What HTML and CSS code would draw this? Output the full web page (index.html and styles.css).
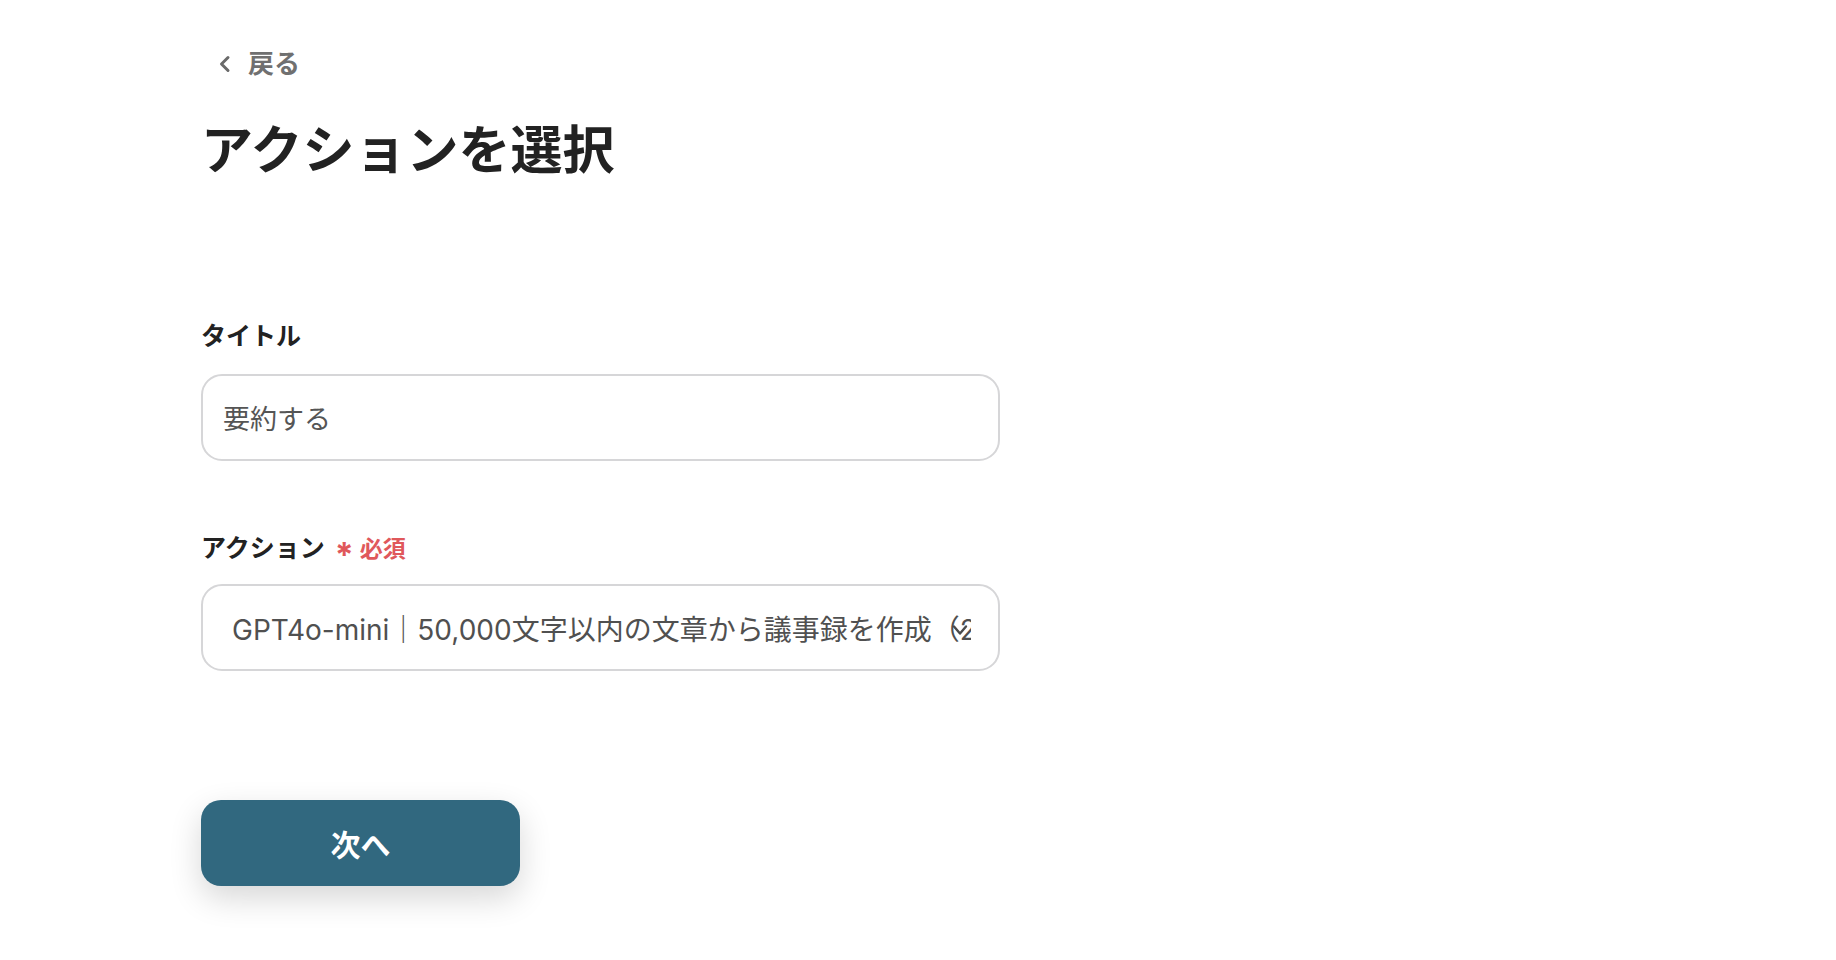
FILE: index.html
```html
<!DOCTYPE html>
<html lang="ja">
  <head>
    <meta charset="utf-8">
    <title>アクションを選択</title>
    <link rel="stylesheet" href="styles.css">
  </head>
  <body>
    <div class="page">
      <a class="back" href="#">
        <svg class="back-icon" width="16" height="18" viewBox="0 0 16 18">
          <path d="M11 2.5 L4.5 9 L11 15.5" fill="none" stroke="#6a6a6a" stroke-width="3" stroke-linecap="round" stroke-linejoin="round"/>
        </svg>
        <span>戻る</span>
      </a>
      <h1 class="title">アクションを選択</h1>

      <div class="field field-first">
        <div class="label">タイトル</div>
        <div class="box">
          <span class="box-text">要約する</span>
        </div>
      </div>

      <div class="field">
        <div class="label">アクション <span class="required"><span class="star">*</span>必須</span></div>
        <div class="box select">
          <span class="select-text">GPT4o-mini｜50,000文字以内の文章から議事録を作成（2</span>
          <svg class="chevron" width="16" height="14" viewBox="0 0 16 14">
            <path d="M2 3.5 L8 10.5 L14 3.5" fill="none" stroke="#4a4a4a" stroke-width="2.4" stroke-linecap="round" stroke-linejoin="round"/>
          </svg>
        </div>
      </div>

      <button class="next">次へ</button>
    </div>
  </body>
</html>
```

FILE: styles.css
```css
* {
  box-sizing: border-box;
}

body {
  margin: 0;
  background: #ffffff;
  font-family: Inter, "Noto Sans CJK JP", sans-serif;
  color: #222222;
}

.page {
  display: flex;
  flex-direction: column;
  align-items: flex-start;
  padding: 51px 0 80px 201px;
}

.back {
  display: flex;
  align-items: center;
  gap: 15px;
  margin-left: 16px;
  height: 26px;
  color: #707070;
  font-size: 26px;
  line-height: 26px;
  font-weight: 700;
  text-decoration: none;
}

.title {
  margin: 44px 0 0 0;
  font-size: 52px;
  line-height: 60px;
  font-weight: 700;
  color: #222222;
}

.field {
  display: flex;
  flex-direction: column;
  margin-top: 71px;
}

.field-first {
  margin-top: 139px;
}

.label {
  font-size: 25px;
  line-height: 32px;
  font-weight: 700;
  color: #222222;
  margin-bottom: 22px;
}

.required {
  color: #e0585b;
  font-size: 23px;
  font-weight: 700;
}

.star {
  display: inline-block;
  font-size: 34px;
  line-height: 20px;
  margin: 0 6px 0 4px;
  transform: translateY(10px);
}

.box {
  position: relative;
  display: flex;
  align-items: center;
  width: 799px;
  height: 87px;
  border: 2px solid #d6d6d8;
  border-radius: 21px;
  padding-left: 20px;
  overflow: hidden;
}

.box-text {
  font-size: 27px;
  color: #555555;
}

.select {
  margin-top: -3px;
  padding: 0 27px 0 29px;
}

.select-text {
  display: block;
  min-width: 0;
  white-space: nowrap;
  overflow: hidden;
  font-size: 28px;
  color: #505050;
}

.chevron {
  position: absolute;
  z-index: 1;
  right: 30px;
  top: 37px;
}

.next {
  margin-top: 129px;
  width: 319px;
  height: 86px;
  border: none;
  border-radius: 20px;
  background: #31687f;
  color: #ffffff;
  font-family: Inter, "Noto Sans CJK JP", sans-serif;
  font-size: 30px;
  font-weight: 700;
  box-shadow: 0 12px 32px rgba(0, 0, 0, 0.16);
}
```
